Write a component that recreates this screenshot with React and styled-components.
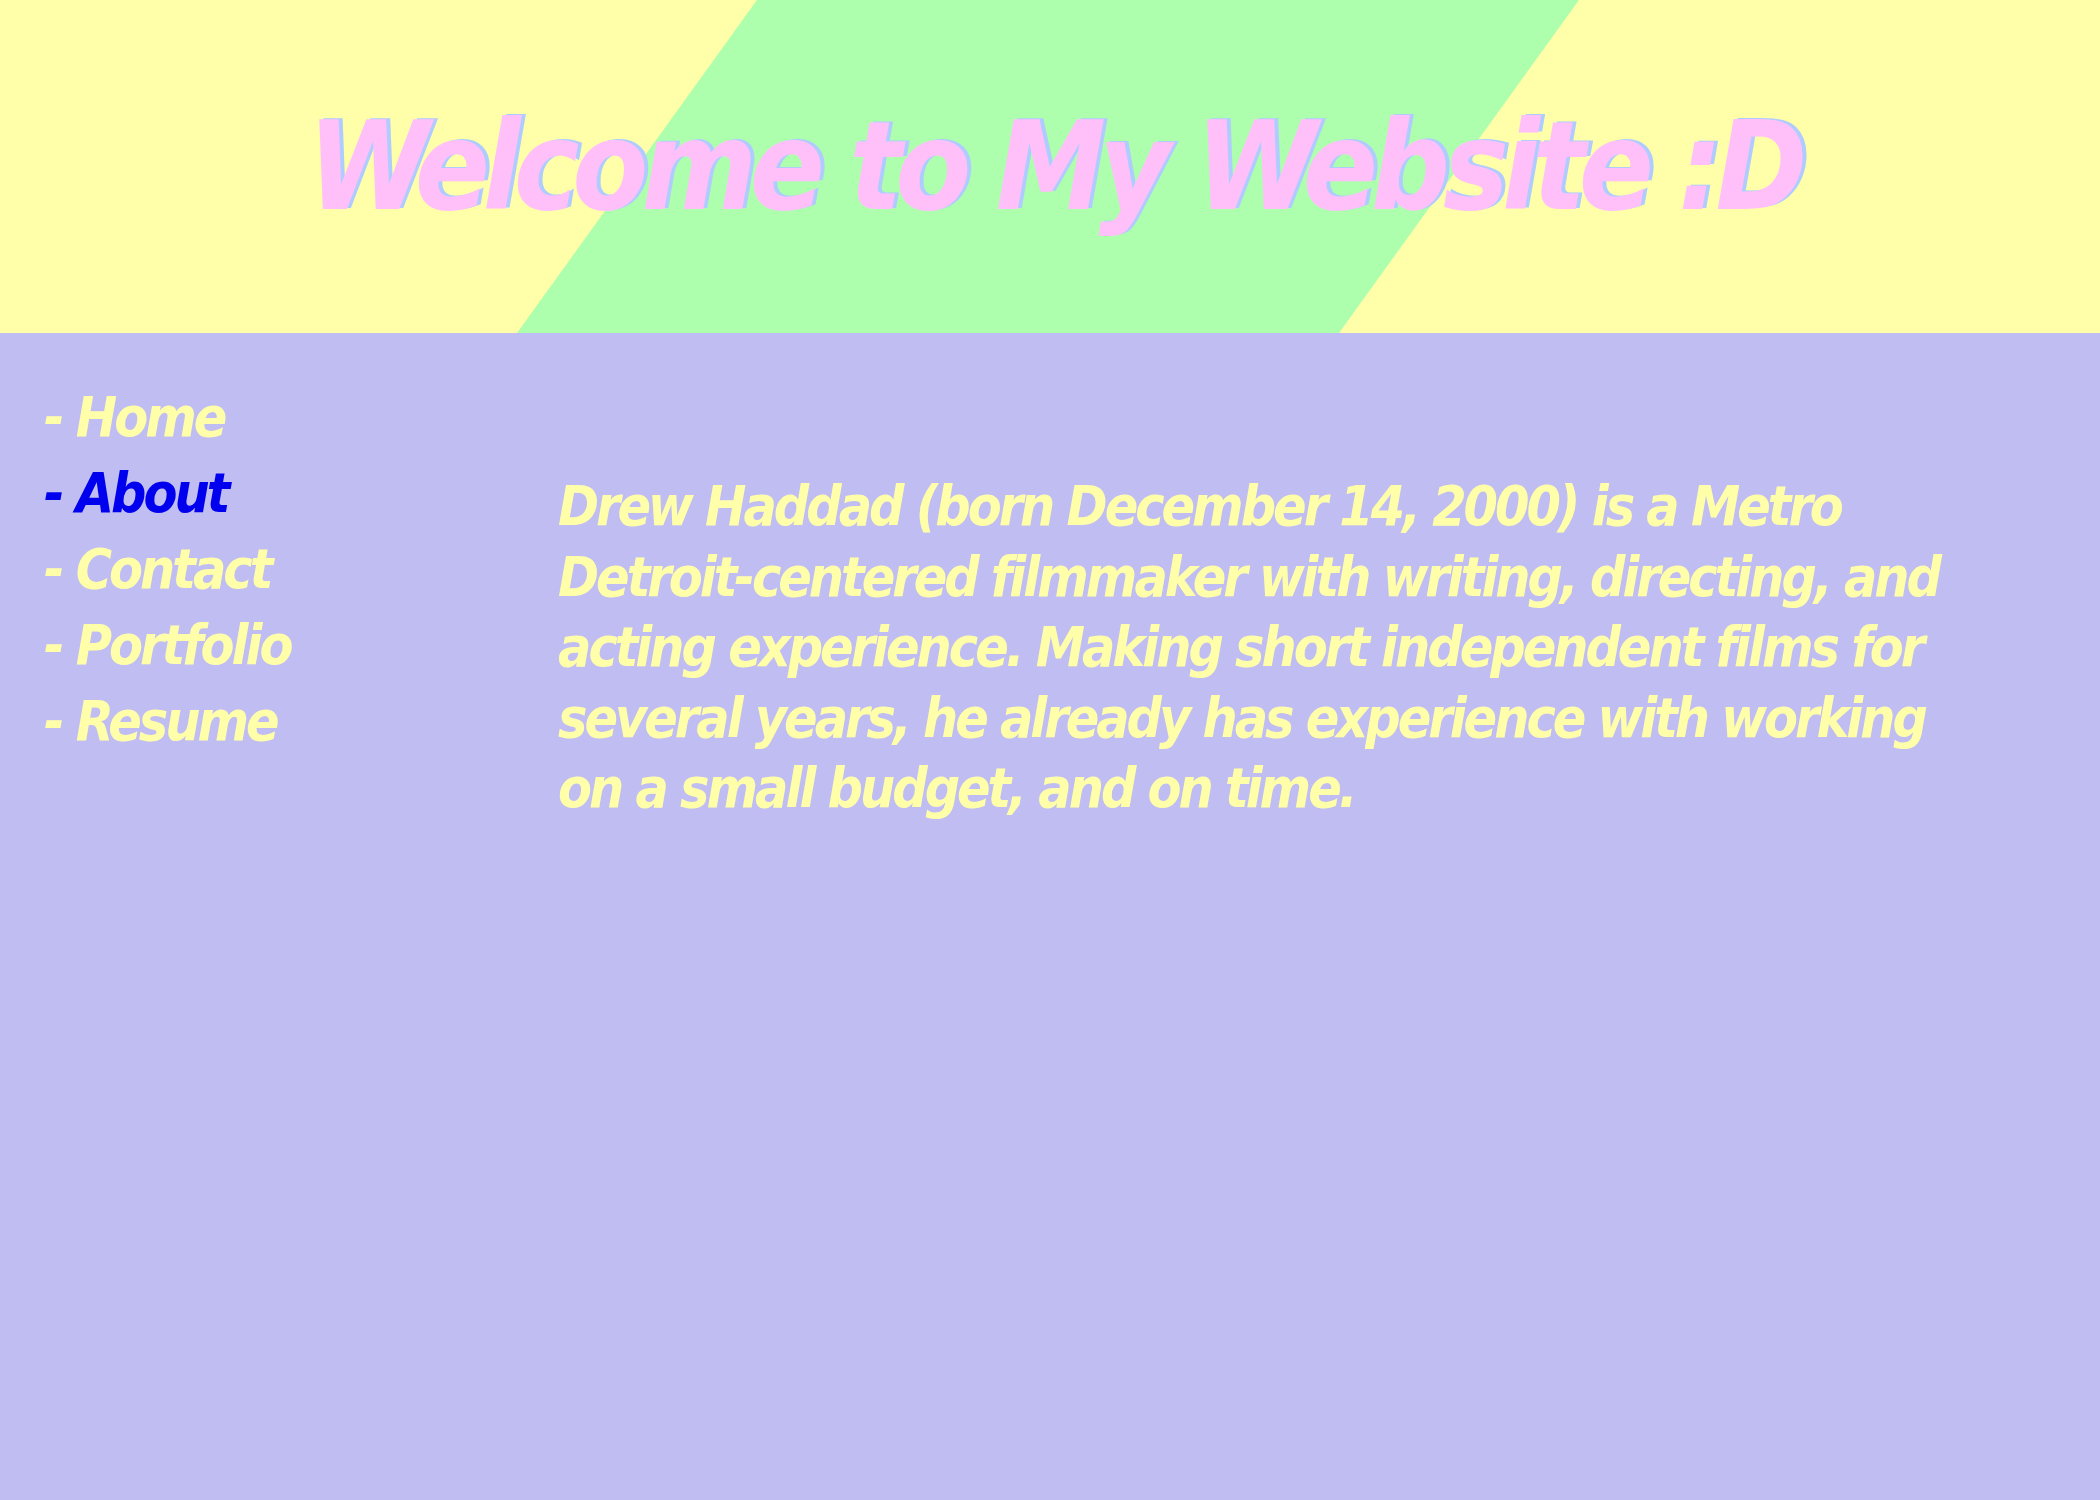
import React from 'react';
import styled, {createGlobalStyle} from "styled-components";

const GlobalStyle = createGlobalStyle`
html, body {
  margin:0;
  padding:0;
  background-color:#c0bdf2;
}
body {
  font-family:"DejaVu Sans Condensed", "Liberation Sans", sans-serif;
  font-stretch:condensed;
}
`;

const StyledPage = styled.div`
min-height:1500px;
width:100%;
background-color:#c0bdf2;
`;

const StyledHeader = styled.header`
height:333px;
width:100%;
background-color:#ffffaa;
position:relative;
display:flex;
align-items:center;
justify-content:center;
overflow:hidden;

&::before{
  content:"";
  position:absolute;
  inset:0;
  background-color:#adffad;
  clip-path:polygon(757px 0, 1579px 0, 1339px 100%, 517px 100%);
}
`;

const StyledTitle = styled.h1`
position:relative;
margin:0 0 0 8px;
font-size:123px;
font-weight:700;
font-style:italic;
letter-spacing:-7px;
color:#ffc0fa;
text-shadow:4px -1px 0 #b0ccff;
white-space:nowrap;
`;

const StyledMain = styled.main`
display:flex;
align-items:flex-start;
padding:0 44px;
`;

const StyledNav = styled.nav`
width:514px;
flex-shrink:0;
display:flex;
flex-direction:column;
padding-top:46px;
`;

const StyledNavItem = styled.a`
font-size:55px;
line-height:76px;
font-weight:700;
font-style:italic;
letter-spacing:-3px;
text-decoration:none;
color:${props=>props.$active ? "#0000ee" : "#ffffaa"};
`;

const StyledText = styled.p`
margin:0;
padding-top:138px;
font-size:55px;
line-height:70.5px;
font-weight:700;
font-style:italic;
letter-spacing:-3px;
color:#ffffaa;
white-space:nowrap;
`;

const links = ["Home", "About", "Contact", "Portfolio", "Resume"];

const App = () => {
  return (
    <StyledPage>
      <GlobalStyle/>
      <StyledHeader>
        <StyledTitle>Welcome to My Website :D</StyledTitle>
      </StyledHeader>
      <StyledMain>
        <StyledNav>
          {links.map(link => (
            <StyledNavItem key={link} href="#" $active={link === "About"}>- {link}</StyledNavItem>
          ))}
        </StyledNav>
        <StyledText>
          Drew Haddad (born December 14, 2000) is a Metro<br/>
          Detroit-centered filmmaker with writing, directing, and<br/>
          acting experience. Making short independent films for<br/>
          several years, he already has experience with working<br/>
          on a small budget, and on time.
        </StyledText>
      </StyledMain>
    </StyledPage>
  );
};

export default App;
